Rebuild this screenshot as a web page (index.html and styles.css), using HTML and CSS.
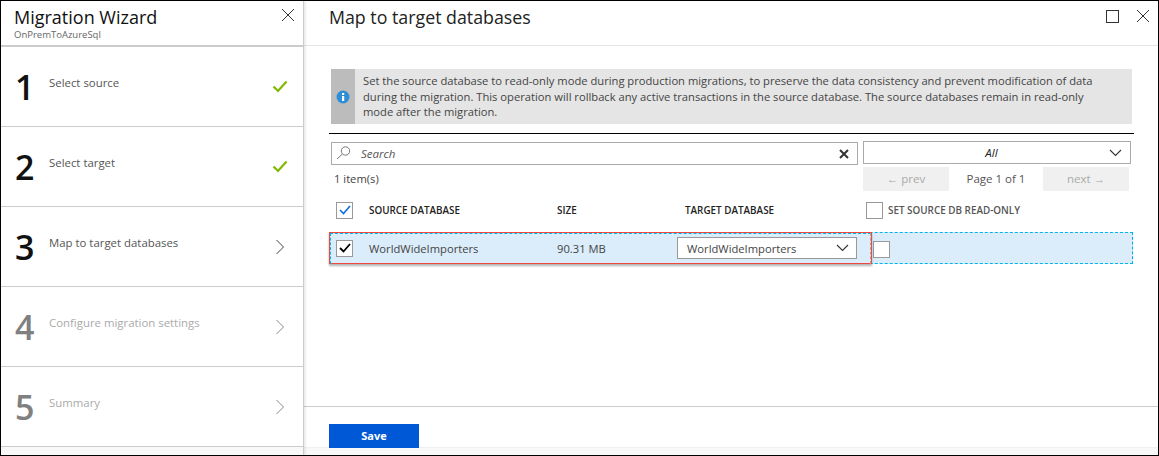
FILE: index.html
```html
<!DOCTYPE html>
<html lang="en">
  <head>
    <meta charset="UTF-8" />
    <title>Map to target databases</title>
    <link rel="stylesheet" href="styles.css">
  </head>
  <body>
    <div class="frame">
      <aside class="wizard">
        <header class="wizard-head">
          <div>
            <h2>Migration Wizard</h2>
            <p>OnPremToAzureSql</p>
          </div>
          <svg class="close-icon" width="14" height="14" viewBox="0 0 14 14"><path d="M1 1l12 12M13 1L1 13" /></svg>
        </header>
        <ol class="steps">
          <li class="step">
            <span class="step-num">1</span>
            <span class="step-name">Select source</span>
            <svg class="step-check" width="16" height="13" viewBox="0 0 16 13"><path d="M1.5 6.5l4.5 4.5 8.5-9.5" /></svg>
          </li>
          <li class="step">
            <span class="step-num">2</span>
            <span class="step-name">Select target</span>
            <svg class="step-check" width="16" height="13" viewBox="0 0 16 13"><path d="M1.5 6.5l4.5 4.5 8.5-9.5" /></svg>
          </li>
          <li class="step">
            <span class="step-num">3</span>
            <span class="step-name">Map to target databases</span>
            <svg class="step-arrow" width="10" height="16" viewBox="0 0 10 16"><path d="M1.5 1l7 7-7 7" /></svg>
          </li>
          <li class="step disabled">
            <span class="step-num">4</span>
            <span class="step-name">Configure migration settings</span>
            <svg class="step-arrow" width="10" height="16" viewBox="0 0 10 16"><path d="M1.5 1l7 7-7 7" /></svg>
          </li>
          <li class="step disabled">
            <span class="step-num">5</span>
            <span class="step-name">Summary</span>
            <svg class="step-arrow" width="10" height="16" viewBox="0 0 10 16"><path d="M1.5 1l7 7-7 7" /></svg>
          </li>
        </ol>
      </aside>

      <main class="blade">
        <header class="blade-head">
          <h1>Map to target databases</h1>
          <div class="blade-actions">
            <span class="maximize"></span>
            <svg class="close-icon" width="14" height="14" viewBox="0 0 14 14"><path d="M1 1l12 12M13 1L1 13" /></svg>
          </div>
        </header>

        <section class="blade-body">
          <div class="notice">
            <div class="notice-icon">
              <svg width="14" height="14" viewBox="0 0 14 14">
                <circle cx="7" cy="7" r="6.5" fill="#2f8fd6" />
                <rect x="6" y="6" width="2.2" height="5" fill="#fff" />
                <rect x="6" y="3" width="2.2" height="2" fill="#fff" />
              </svg>
            </div>
            <p>Set the source database to read-only mode during production migrations, to preserve the data consistency and prevent modification of data during the migration. This operation will rollback any active transactions in the source database. The source databases remain in read-only mode after the migration.</p>
          </div>

          <div class="filters">
            <div class="search">
              <svg class="search-icon" width="15" height="14" viewBox="0 0 15 14"><circle cx="9.5" cy="5" r="4.2" /><path d="M6.5 8L1 13" /></svg>
              <span class="search-text">Search</span>
              <svg class="search-clear" width="10" height="10" viewBox="0 0 10 10"><path d="M1 1l8 8M9 1L1 9" /></svg>
            </div>
            <div class="filter-select">
              <span>All</span>
              <svg class="chevron" width="13" height="8" viewBox="0 0 13 8"><path d="M1 1l5.5 5.5L12 1" /></svg>
            </div>
          </div>

          <div class="pager-row">
            <span class="count">1 item(s)</span>
            <div class="pager">
              <span class="pager-btn">← prev</span>
              <span class="pager-page">Page 1 of 1</span>
              <span class="pager-btn">next →</span>
            </div>
          </div>

          <div class="table-row table-head">
            <span class="checkbox">
              <svg width="12" height="10" viewBox="0 0 12 10"><path class="tick-blue" d="M1 5l3.5 3.5L11 1" /></svg>
            </span>
            <span>SOURCE DATABASE</span>
            <span>SIZE</span>
            <span>TARGET DATABASE</span>
            <span class="readonly-head"><span class="checkbox"></span><span class="readonly-label">SET SOURCE DB READ-ONLY</span></span>
          </div>

          <div class="table-row table-item">
            <span class="checkbox small">
              <svg width="12" height="10" viewBox="0 0 12 10"><path class="tick-black" d="M1 5l3.5 3.5L11 1" /></svg>
            </span>
            <span>WorldWideImporters</span>
            <span>90.31 MB</span>
            <span class="target-select">
              <span>WorldWideImporters</span>
              <svg class="chevron" width="13" height="8" viewBox="0 0 13 8"><path d="M1 1l5.5 5.5L12 1" /></svg>
            </span>
            <span class="checkbox item-readonly"></span>
            <span class="row-mark"></span>
          </div>
        </section>

        <footer class="blade-foot">
          <button type="button">Save</button>
        </footer>
      </main>
    </div>
  </body>
</html>
```

FILE: styles.css
```css
* {
  box-sizing: border-box;
}
body {
  margin: 0;
  font-family: "Open Sans", "Noto Sans", Arial, sans-serif;
  color: #444;
}
svg {
  display: block;
  fill: none;
}
.frame {
  width: 1159px;
  height: 456px;
  display: flex;
  border: 1px solid #000;
  overflow: hidden;
  background: #fff;
}

/* left wizard */
.wizard {
  width: 303px;
  flex: none;
  display: flex;
  flex-direction: column;
  background: #f8f8f8;
  border-right: 1px solid #ccc;
  box-shadow: 1px 0 3px rgba(0, 0, 0, 0.12);
  position: relative;
}
.wizard-head {
  height: 46px;
  flex: none;
  padding: 4px 8px 0 13px;
  display: flex;
  justify-content: space-between;
  background: #fff;
  border-bottom: 2px solid #ccc;
}
.wizard-head h2 {
  margin: 0;
  font-size: 18px;
  line-height: 24px;
  font-weight: 400;
  color: #111;
}
.wizard-head p {
  margin: 0;
  font-size: 9.5px;
  line-height: 12px;
  color: #666;
}
.close-icon path {
  stroke: #333;
  stroke-width: 1;
}
.wizard-head .close-icon {
  margin-top: 3px;
}
.steps {
  list-style: none;
  margin: 0;
  padding: 0;
}
.step {
  height: 80px;
  display: flex;
  padding: 0 15px 0 14px;
  background: #fff;
  border-bottom: 1px solid #ccc;
  position: relative;
}
.step-num {
  width: 34px;
  flex: none;
  font-size: 34px;
  font-weight: 600;
  line-height: 40px;
  margin-top: 20px;
  color: #111;
}
.step-name {
  flex: 1;
  font-size: 11.4px;
  line-height: 16px;
  margin-top: 28px;
  color: #555;
}
.step-check {
  margin: 33px 0 0;
}
.step-check path {
  stroke: #7fba00;
  stroke-width: 2.2;
}
.step-arrow {
  margin: 32px 3px 0 0;
}
.step-arrow path {
  stroke: #444;
  stroke-width: 1;
}
.disabled .step-num {
  color: #808080;
}
.disabled .step-name {
  color: #aaa;
}
.disabled .step-arrow path {
  stroke: #888;
}

/* right blade */
.blade {
  flex: 1;
  display: flex;
  flex-direction: column;
  min-width: 0;
}
.blade-head {
  height: 45px;
  flex: none;
  padding: 4px 8px 0 25px;
  display: flex;
  justify-content: space-between;
  border-bottom: 1px solid #e4e4e4;
}
.blade-head h1 {
  margin: 0;
  font-size: 17.8px;
  line-height: 24px;
  font-weight: 400;
  color: #222;
}
.blade-actions {
  display: flex;
  gap: 17px;
  padding-top: 4px;
}
.maximize {
  width: 13px;
  height: 13px;
  margin-top: 1px;
  border: 1px solid #333;
}
.blade-body {
  flex: 1;
  padding: 23px 25px 0 25px;
  border-bottom: 1px solid #ccc;
}
.notice {
  margin-left: 2px;
  width: 801px;
  height: 55px;
  display: flex;
  background: #e5e5e5;
  position: relative;
}
.notice::after {
  content: "";
  position: absolute;
  left: -2px;
  right: -2px;
  bottom: -10px;
  height: 1px;
  background: #000;
}
.notice-icon {
  width: 24px;
  flex: none;
  background: #bcbcbc;
  display: flex;
  align-items: center;
  justify-content: center;
  padding-top: 1px;
}
.notice p {
  margin: 0;
  padding: 4px 30px 0 8px;
  font-size: 11.2px;
  line-height: 15.5px;
  color: #444;
}
.filters {
  margin: 17px 0 0 2px;
  display: flex;
  gap: 5px;
  width: 800px;
}
.search {
  width: 527px;
  height: 23px;
  margin-top: 1px;
  display: flex;
  align-items: center;
  padding: 0 8px 0 4px;
  border: 1px solid #aaa;
}
.search-icon circle,
.search-icon path {
  stroke: #777;
  stroke-width: 1;
}
.search-icon {
  margin-bottom: 2px;
}
.search-text {
  flex: 1;
  margin-left: 10px;
  font-size: 11.5px;
  font-style: italic;
  color: #555;
}
.search-clear path {
  stroke: #333;
  stroke-width: 2;
}
.filter-select {
  width: 268px;
  height: 23px;
  display: flex;
  align-items: center;
  justify-content: space-between;
  padding: 0 8px 0 0;
  border: 1px solid #aaa;
  font-size: 11.5px;
  font-style: italic;
  color: #222;
}
.filter-select span {
  flex: 1;
  text-align: center;
  padding-left: 10px;
}
.chevron path {
  stroke: #333;
  stroke-width: 1.1;
}
.pager-row {
  margin: 2px 0 0 5px;
  display: flex;
  justify-content: space-between;
  width: 795px;
  height: 24px;
}
.count {
  font-size: 11.2px;
  line-height: 24px;
}
.pager {
  display: flex;
  width: 266px;
}
.pager-btn {
  width: 86px;
  height: 24px;
  background: #f0f0f0;
  color: #aaa;
  font-size: 11.5px;
  line-height: 24px;
  text-align: center;
}
.pager-page {
  flex: 1;
  font-size: 11.5px;
  line-height: 24px;
  text-align: center;
  color: #555;
}
.table-row {
  display: grid;
  grid-template-columns: 40px 188px 120px 188px 1fr;
  align-items: center;
  width: 804px;
}
.table-head {
  height: 28px;
  margin-top: 5px;
  font-size: 9.9px;
  font-weight: 600;
  color: #222;
}
.table-head > span:nth-child(4) {
  padding-left: 8px;
}
.checkbox {
  width: 17px;
  height: 17px;
  margin-left: 7px;
  display: flex;
  align-items: center;
  justify-content: center;
  border: 1px solid #999;
  background: #fff;
}
.checkbox.small {
  margin-left: 6px;
}
.tick-blue {
  stroke: #0b6fe0;
  stroke-width: 1.6;
}
.tick-black {
  stroke: #000;
  stroke-width: 1.8;
}
.readonly-head {
  display: flex;
  align-items: center;
  margin-left: 1px;
  color: #555;
}
.readonly-head .checkbox {
  margin-left: 0;
}
.readonly-label {
  margin-left: 5px;
}
.table-item {
  grid-template-columns: 39px 188px 120px 188px 1fr;
  height: 32px;
  margin-top: 8px;
  background: #dbecfb;
  border: 1px dashed #00b4f0;
  position: relative;
  color: #444;
  font-size: 11.2px;
}
.target-select {
  width: 180px;
  height: 22px;
  padding: 0 7px 0 9px;
  display: flex;
  align-items: center;
  justify-content: space-between;
  background: #fff;
  border: 1px solid #999;
}
.item-readonly {
  margin-left: 8px;
  margin-top: 3px;
}
.row-mark {
  position: absolute;
  left: -1px;
  top: -1px;
  width: 543px;
  height: 32px;
  border: 1px solid #f0483e;
  box-shadow: 0 2px 2px rgba(0, 0, 0, 0.3);
  pointer-events: none;
}
.row-mark::after {
  content: "";
  display: block;
  height: 100%;
  border: 1px dashed #00b4f0;
  border-right-color: #a8a8a8;
  border-bottom: none;
}
.blade-foot {
  height: 48px;
  flex: none;
  padding: 16px 0 0 25px;
  background: linear-gradient(#fff 40px, #e8e8e8 40px, #f8f8f8 41px);
}
.blade-foot button {
  width: 90px;
  height: 24px;
  border: none;
  background: #0058d6;
  color: #fff;
  font-family: inherit;
  font-size: 11px;
  font-weight: 700;
}
```
